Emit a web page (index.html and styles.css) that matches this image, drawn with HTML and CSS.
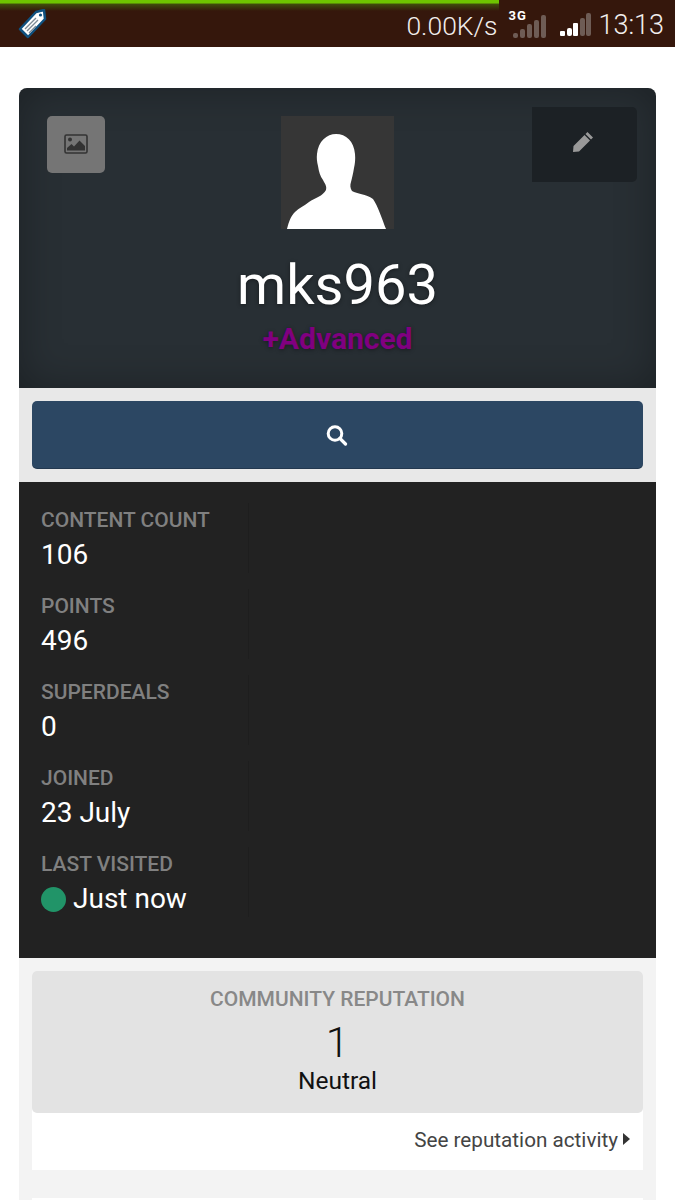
FILE: index.html
```html
<!DOCTYPE html>
<html lang="en">
<head>
    <meta charset="UTF-8">
    <meta name="viewport" content="width=device-width, initial-scale=1.0">
    <title>mks963 - Profile</title>
    <link rel="stylesheet" href="styles.css">
</head>
<body>
<div class="status-bar">
    <div class="progress"></div>
    <svg class="tag-icon" width="30" height="32" viewBox="0 0 30 32">
        <path d="M3 20 L19 3 L27 1 L28 10 L11 28 Z" fill="#fff" stroke="#10517f" stroke-width="2.5" stroke-linejoin="round"/>
        <circle cx="23.5" cy="6" r="1.6" fill="#10517f"/>
        <path d="M8 20 L19 9 M10 22 L21 11 M12 24 L19 17" stroke="#7d8a94" stroke-width="1.4"/>
    </svg>
    <div class="status-right">
        <span class="speed">0.00K/s</span>
        <div class="net">
            <span class="net-type">3G</span>
            <svg width="33" height="23" viewBox="0 0 33 23">
                <g fill="#6e5c55">
                    <rect x="0" y="18" width="5" height="5" rx="2"/>
                    <rect x="7" y="14" width="5" height="9" rx="2"/>
                    <rect x="14" y="9" width="5" height="14" rx="2"/>
                    <rect x="21" y="5" width="5" height="18" rx="2"/>
                    <rect x="28" y="0" width="5" height="23" rx="2"/>
                </g>
            </svg>
        </div>
        <svg class="signal" width="31" height="23" viewBox="0 0 31 23">
            <rect x="0" y="18" width="5" height="5" rx="1" fill="#fff"/>
            <rect x="7" y="15" width="5" height="8" rx="2" fill="#fff"/>
            <rect x="13" y="10" width="5" height="13" rx="1" fill="#fff"/>
            <rect x="20" y="5" width="5" height="18" rx="2" fill="#6e5c55"/>
            <rect x="26" y="0" width="5" height="23" rx="2" fill="#6e5c55"/>
        </svg>
        <span class="clock">13:13</span>
    </div>
</div>

<div class="profile">
    <div class="profile-header">
        <a class="cover-btn">
            <svg width="24" height="20" viewBox="0 0 24 20">
                <rect x="1" y="1" width="22" height="18" rx="1.5" fill="none" stroke="#333" stroke-width="1.6"/>
                <circle cx="6" cy="5.5" r="2" fill="#333"/>
                <path d="M3 16.5 V14 L7.5 10 L10 12.5 L15.5 6.5 L21 12 V16.5 Z" fill="#333"/>
            </svg>
        </a>
        <a class="edit-btn">
            <svg width="22" height="22" viewBox="0 0 22 22">
                <path d="M15.5 1 L21 6.5 L19 8.5 L13.5 3 Z M12.5 4 L18 9.5 L7 20.5 L1 21 L1.5 15 Z" fill="#999"/>
            </svg>
        </a>
        <div class="avatar">
            <svg width="113" height="113" viewBox="0 0 113 113">
                <path d="M6 113 C8 105 10 100 14 96 C18 92 23 90 28 86 C34 82 42 80 45 74 C46 70 44 68 42 64 C39 60 38 56 37 50 C36 46 35.5 42 36 38 C37 25 46 18 55 18 C65 18 73 25 74 38 C74.5 43 74 48 73 52 C72 58 71 62 70 66 C69 69 69 72 71 75 C76 78 85 78 92 83 C97 90 101 103 105 113 Z" fill="#fff"/>
            </svg>
        </div>
        <h1 class="username">mks963</h1>
        <p class="user-group">+Advanced</p>
    </div>

    <div class="search-row">
        <a class="search-btn">
            <svg width="23" height="22" viewBox="0 0 22 22">
                <circle cx="9.5" cy="9.5" r="6.8" fill="none" stroke="#fff" stroke-width="3"/>
                <path d="M14.5 14.5 L20 20" stroke="#fff" stroke-width="3.2" stroke-linecap="round"/>
            </svg>
        </a>
    </div>

    <div class="stats">
        <div class="stat">
            <div class="stat-label">Content Count</div>
            <div class="stat-value">106</div>
        </div>
        <div class="stat">
            <div class="stat-label">Points</div>
            <div class="stat-value">496</div>
        </div>
        <div class="stat">
            <div class="stat-label">SuperDeals</div>
            <div class="stat-value">0</div>
        </div>
        <div class="stat">
            <div class="stat-label">Joined</div>
            <div class="stat-value">23 July</div>
        </div>
        <div class="stat">
            <div class="stat-label">Last visited</div>
            <div class="stat-value"><span class="online-dot"></span>Just now</div>
        </div>
    </div>

    <div class="sidebar">
        <div class="rep-card">
            <div class="rep-box">
                <div class="rep-title">Community Reputation</div>
                <div class="rep-number">1</div>
                <div class="rep-text">Neutral</div>
            </div>
            <div class="rep-link">See reputation activity<span class="caret"></span></div>
        </div>
        <div class="next-card"></div>
    </div>
</div>
</body>
</html>
```

FILE: styles.css
```css
* {
    margin: 0;
    padding: 0;
    box-sizing: border-box;
}

html, body {
    height: 1200px;
    overflow: hidden;
}

body {
    font-family: Roboto, 'Liberation Sans', sans-serif;
    background: #ffffff;
}

/* status bar */
.status-bar {
    position: relative;
    height: 47px;
    background: #35170c;
    display: flex;
    align-items: center;
    justify-content: space-between;
    padding: 0 11px 0 17px;
}

.progress {
    position: absolute;
    top: 0;
    left: 0;
    width: 499px;
    height: 11px;
    background: linear-gradient(to bottom, #6ec400 0%, #6ec400 25%, #3f4a0c 40%, #35170c 100%);
}

.tag-icon {
    position: relative;
    margin-top: 3px;
}

.status-right {
    display: flex;
    align-items: center;
    color: #f2eeec;
    font-size: 26.5px;
    font-weight: 300;
}

.speed {
    width: 91px;
    margin-top: 3px;
}

.net {
    position: relative;
    width: 33px;
    height: 23px;
    margin: 0 0 0 16px;
    top: 1px;
}

.net-type {
    position: absolute;
    top: -3px;
    left: -5px;
    font-size: 13px;
    font-weight: 700;
    letter-spacing: 1px;
    color: #fff;
    line-height: 12px;
}

.signal {
    margin: 0 7px 0 14px;
    position: relative;
    top: 1px;
}

.clock {
    font-size: 27px;
    margin-top: 3px;
}

/* profile */
.profile {
    margin: 41px 19px 0;
}

.profile-header {
    position: relative;
    height: 300px;
    padding-top: 28px;
    background: #282f34;
    border-radius: 8px 8px 0 0;
    box-shadow: inset 0 0 40px rgba(0, 0, 0, 0.3);
    text-align: center;
}

.cover-btn {
    position: absolute;
    top: 28px;
    left: 28px;
    width: 58px;
    height: 57px;
    background: #757575;
    border-radius: 5px;
    display: flex;
    align-items: center;
    justify-content: center;
    padding-bottom: 2px;
}

.edit-btn {
    position: absolute;
    top: 19px;
    right: 19px;
    width: 105px;
    height: 75px;
    background: #1c2125;
    border-radius: 0 5px 5px 0;
    display: flex;
    align-items: center;
    justify-content: center;
    padding-bottom: 6px;
    padding-right: 3px;
}

.avatar {
    width: 113px;
    height: 113px;
    margin: 0 auto;
    background: #363636;
}

.avatar svg {
    display: block;
}

.username {
    margin-top: 26px;
    font-size: 56px;
    line-height: 60px;
    font-weight: 400;
    color: #ffffff;
    text-shadow: 0 1px 4px rgba(0, 0, 0, 0.4);
}

.user-group {
    margin-top: 7px;
    font-size: 30px;
    line-height: 34px;
    font-weight: 700;
    color: #800080;
    text-shadow: 0 1px 4px rgba(0, 0, 0, 0.4);
}

.search-row {
    background: #e8e8e8;
    padding: 13px;
}

.search-btn {
    display: flex;
    height: 68px;
    align-items: center;
    justify-content: center;
    padding-right: 3px;
    background: #2c4763;
    border-radius: 5px;
    box-shadow: inset 0 -1px 0 rgba(0, 0, 0, 0.2);
}

/* stats */
.stats {
    height: 476px;
    padding: 21px 0 0 22px;
    background: #222222;
}

.stat {
    width: 208px;
    height: 70px;
    margin-bottom: 16px;
    border-right: 1px solid #1e1e1e;
}

.stat-label {
    padding-top: 3px;
    font-size: 21px;
    line-height: 28px;
    font-weight: 500;
    color: #808080;
    text-transform: uppercase;
}

.stat-value {
    margin-top: 4px;
    font-size: 28px;
    line-height: 34px;
    color: #ffffff;
    display: flex;
    align-items: center;
}

.online-dot {
    width: 25px;
    height: 25px;
    margin-right: 7px;
    border-radius: 50%;
    background: #219468;
}

/* reputation */
.sidebar {
    height: 260px;
    padding: 13px;
    background: #f3f3f3;
}

.rep-card {
    background: #ffffff;
    border-radius: 5px 5px 0 0;
}

.rep-box {
    height: 142px;
    padding-top: 14px;
    background: #e3e3e3;
    border-radius: 5px;
    text-align: center;
}

.rep-title {
    font-size: 21px;
    line-height: 28px;
    font-weight: 500;
    color: #888888;
    text-transform: uppercase;
}

.rep-number {
    margin-top: 8px;
    font-size: 42px;
    line-height: 44px;
    font-weight: 300;
    color: #111111;
}

.rep-text {
    margin-top: 1px;
    font-size: 24.5px;
    line-height: 30px;
    color: #111111;
}

.rep-link {
    height: 57px;
    padding: 13px 13px 0 0;
    display: flex;
    justify-content: flex-end;
    align-items: flex-start;
    font-size: 20.7px;
    line-height: 28px;
    color: #444444;
}

.caret {
    width: 0;
    height: 0;
    margin: 7px 0 0 5px;
    border-top: 6px solid transparent;
    border-bottom: 6px solid transparent;
    border-left: 7px solid #333333;
}

.next-card {
    height: 40px;
    margin-top: 28px;
    background: #ffffff;
}
```
